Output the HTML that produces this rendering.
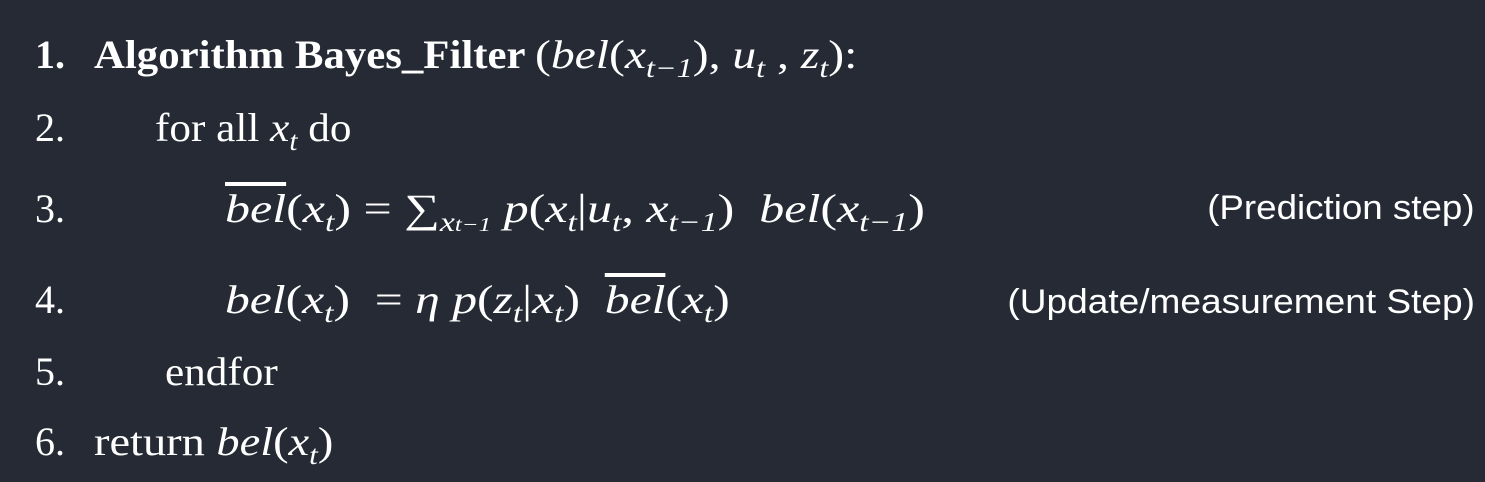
<!DOCTYPE html>
<html><head><style>
html,body{margin:0;padding:0;}
body{width:1485px;height:482px;background:#252a35;color:#fff;position:relative;overflow:hidden;font-family:"Liberation Serif",serif;font-size:40px;}
.l{position:absolute;line-height:1;white-space:nowrap;transform-origin:left top;}
i{font-style:italic;}
sub{font-size:27px;vertical-align:-9px;line-height:0;font-style:italic;}
.o{text-decoration:overline;}
.s{font-family:"Liberation Sans",sans-serif;font-size:34px;transform-origin:right top;}
</style></head><body>
<div class="l" style="left:35px;top:35px"><b>1.</b></div>
<div class="l" style="left:94px;top:35px;transform:scaleX(1.07)"><b>Algorithm Bayes_Filter</b></div>
<div class="l" style="left:535px;top:35px;transform:scaleX(1.19)">(<i>bel</i>(<i>x</i><sub>t−1</sub>), <i>u</i><sub>t</sub> , <i>z</i><sub>t</sub>):</div>
<div class="l" style="left:35px;top:108px">2.</div>
<div class="l" style="left:155px;top:108px;transform:scaleX(1.08)">for all <i>x</i><sub>t</sub> do</div>
<div class="l" style="left:35px;top:189px">3.</div>
<div class="l" style="left:225px;top:189px;transform:scaleX(1.25)"><i class="o">bel</i>(<i>x</i><sub>t</sub>) = ∑<sub>x<span style="font-size:20px">t−1</span></sub> <i>p</i>(<i>x</i><sub>t</sub>|<i>u</i><sub>t</sub>, <i>x</i><sub>t−1</sub>) &nbsp;<i>bel</i>(<i>x</i><sub>t−1</sub>)</div>
<div class="l s" style="right:10px;top:191px;transform:scaleX(1.08)">(Prediction step)</div>
<div class="l" style="left:35px;top:280px">4.</div>
<div class="l" style="left:225px;top:280px;transform:scaleX(1.24)"><i>bel</i>(<i>x</i><sub>t</sub>) &nbsp;= <i>η p</i>(<i>z</i><sub>t</sub>|<i>x</i><sub>t</sub>) &nbsp;<i class="o">bel</i>(<i>x</i><sub>t</sub>)</div>
<div class="l s" style="right:10px;top:285px;transform:scaleX(1.09)">(Update/measurement Step)</div>
<div class="l" style="left:35px;top:352px">5.</div>
<div class="l" style="left:165px;top:352px;transform:scaleX(1.08)">endfor</div>
<div class="l" style="left:35px;top:422px">6.</div>
<div class="l" style="left:94px;top:422px;transform:scaleX(1.16)">return <i>bel</i>(<i>x</i><sub>t</sub>)</div>
</body></html>
